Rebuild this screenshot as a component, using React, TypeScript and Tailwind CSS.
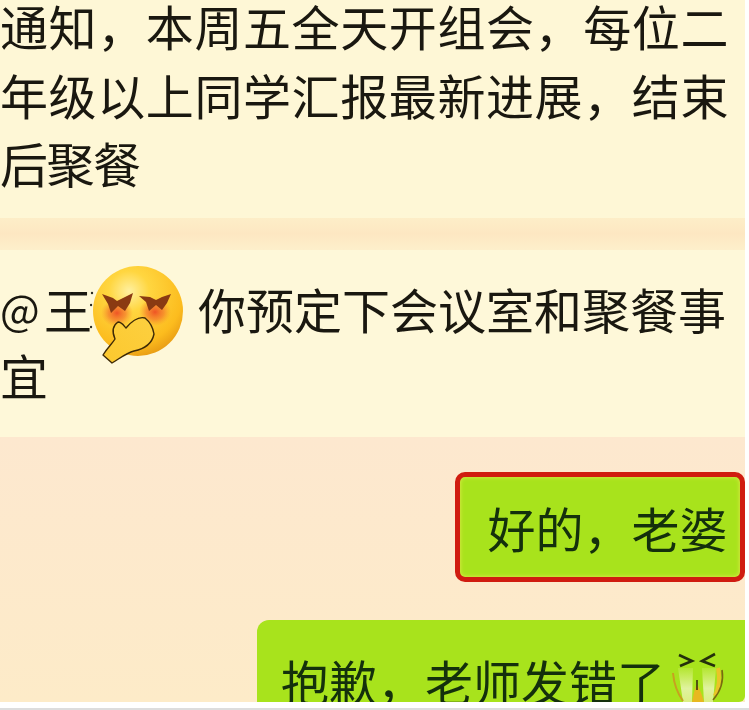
const cjk = "font-['Noto_Sans_CJK_SC','Noto_Sans_CJK_JP',sans-serif]";

function CoverFaceEmoji() {
  return (
    <svg className="absolute left-[90px] top-[260px]" width="100" height="110" viewBox="0 0 100 110">
      <defs>
        <radialGradient id="face" cx="40%" cy="28%" r="75%">
          <stop offset="0" stopColor="#fff0a0" />
          <stop offset="0.3" stopColor="#ffd640" />
          <stop offset="0.8" stopColor="#fcbc1e" />
          <stop offset="1" stopColor="#e89c14" />
        </radialGradient>
        <radialGradient id="blush">
          <stop offset="0" stopColor="#ee4e24" stopOpacity="0.95" />
          <stop offset="0.55" stopColor="#f47a2c" stopOpacity="0.7" />
          <stop offset="1" stopColor="#f8962c" stopOpacity="0" />
        </radialGradient>
        <linearGradient id="hand" x1="0" y1="1" x2="1" y2="0">
          <stop offset="0" stopColor="#fcc82e" />
          <stop offset="1" stopColor="#fdd040" />
        </linearGradient>
      </defs>
      <circle cx="2" cy="33" r="1.2" fill="#2a2a20" />
      <circle cx="1" cy="45" r="1.2" fill="#2a2a20" />
      <circle cx="1" cy="67" r="1.2" fill="#2a2a20" />
      <circle cx="48" cy="51" r="45" fill="url(#face)" />
      <ellipse cx="27" cy="53" rx="16" ry="14" fill="url(#blush)" />
      <ellipse cx="65" cy="52" rx="16" ry="14" fill="url(#blush)" />
      <path d="M12 34 L23 38 L27 41 L33 38 L43 33 L40 43 L35 51 L28 46 L21 53 L18 44 Z" fill="#8a3a12" />
      <path d="M49 36 L60 37 L66 40 L72 37 L81 34 L77 43 L72 50 L66 45 L59 51 L56 42 Z" fill="#8a3a12" />
      <path
        d="M13 95 C17 88 22 84 25 79 C22 72 22 66 28 62 C32 62 34 66 36 68 C41 62 47 56 55 58 C60 62 63 68 64 74 C62 84 54 89 44 91 C36 93 29 99 22 103 Z"
        fill="url(#hand)"
        stroke="#3e2a06"
        strokeWidth="1.4"
        strokeLinejoin="round"
      />
    </svg>
  );
}

function CryEmoji() {
  return (
    <svg className="absolute left-[650px] top-[20px]" width="95" height="62" viewBox="0 0 95 62">
      <defs>
        <linearGradient id="stream" x1="0" y1="0" x2="0" y2="1">
          <stop offset="0" stopColor="#f4f8b0" stopOpacity="0.15" />
          <stop offset="0.6" stopColor="#eef6c0" stopOpacity="0.8" />
          <stop offset="1" stopColor="#f0f4b0" stopOpacity="0.7" />
        </linearGradient>
      </defs>
      <path d="M28 28 H43 L42 62 H33 Z" fill="url(#stream)" />
      <path d="M52 28 H66 L63 62 H54 Z" fill="url(#stream)" />
      <path d="M42 62 C44 52 45 48 47 44 C49 48 52 54 54 62 Z" fill="#e8b820" />
      <path d="M47 40 V50" stroke="#3a3010" strokeWidth="1.6" />
      <path d="M29 15 L42 21 L30 26" fill="none" stroke="#24300c" strokeWidth="2.6" />
      <path d="M65 14 L52 21 L65 26" fill="none" stroke="#24300c" strokeWidth="2.6" />
      <path d="M23 33 C24 45 28 54 33 61" fill="none" stroke="#c8a020" strokeWidth="2" />
      <path d="M68 28 C70 38 69 48 65 56" fill="none" stroke="#eac428" strokeWidth="4" />
      <path d="M72 30 C74 42 70 52 63 60" fill="none" stroke="#7a6a10" strokeWidth="1.6" />
    </svg>
  );
}

export default function App() {
  return (
    <div className={`h-[710px] w-[749px] overflow-hidden bg-white ${cjk}`}>
      <div className="relative flex h-[702px] w-[745px] flex-col overflow-hidden bg-[#fde9d0] text-[#1a1810]">
        <div className="h-[218px] shrink-0 bg-[#fef7d6]">
          <div className="-mt-[9px] whitespace-pre text-[48px] leading-[68.5px] tracking-[0.6px] blur-[0.5px]">
            <div>通知，本周五全天开组会，每位二</div>
            <div>年级以上同学汇报最新进展，结束</div>
            <div className="tracking-[-1.5px]">后聚餐</div>
          </div>
        </div>
        <div className="h-[32px] shrink-0 bg-gradient-to-b from-[#fdeec8] via-[#fde7c2] to-[#fdefcb]" />
        <div className="h-[187px] shrink-0 bg-[#fef8d9] pt-[25px]">
          <div className="whitespace-pre text-[48px] leading-[66px] blur-[0.5px]">
            <div className="flex">
              <span className="w-[44px] text-[42px]">@</span>
              <span className="w-[154px]">王</span>
              <span>你预定下会议室和聚餐事</span>
            </div>
            <div>宜</div>
          </div>
        </div>
        <div className="flex flex-1 flex-col items-end bg-gradient-to-b from-[#fde8cf] to-[#fdebc8] pt-[35px]">
          <div className="flex h-[110px] w-[290px] items-center justify-center rounded-[10px] border-[5px] border-[#d01c10] bg-[#a8e31c] shadow-[inset_0_0_4px_#e6e850]">
            <span className="whitespace-pre pl-[15px] text-[48px] leading-none text-[#14300c] blur-[0.5px]">好的，老婆</span>
          </div>
          <div className="relative mt-[38px] flex h-[82px] w-[488px] items-center rounded-tl-[12px] rounded-br-[6px] bg-[#a8e31c] pl-[24px]">
            <span className="mt-[37px] whitespace-pre text-[48px] leading-none text-[#14300c] blur-[0.5px]">抱歉，老师发错了</span>
          </div>
        </div>
        <CoverFaceEmoji />
        <div className="absolute bottom-0 left-0 h-[82px] w-[745px]">
          <CryEmoji />
        </div>
      </div>
      <div className="mt-[6px] h-[2px] w-[749px] bg-[#dddddd]" />
    </div>
  );
}
